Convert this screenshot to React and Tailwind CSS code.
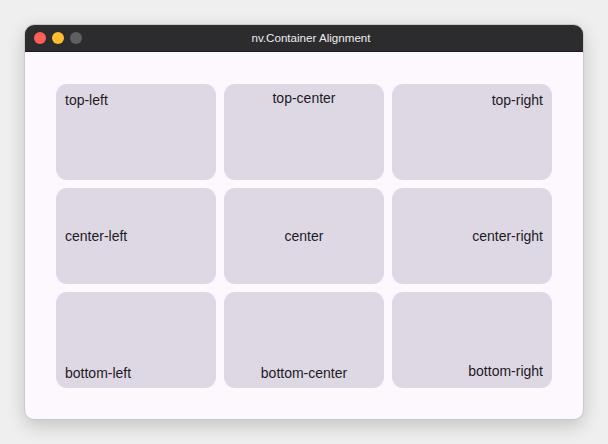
const cells = [
  { label: "top-left", cls: "items-start justify-start pt-[8px] pl-[9px]" },
  { label: "top-center", cls: "items-start justify-center pt-[6px]" },
  { label: "top-right", cls: "items-start justify-end pt-[8px] pr-[9px]" },
  { label: "center-left", cls: "items-center justify-start pl-[9px]" },
  { label: "center", cls: "items-center justify-center" },
  { label: "center-right", cls: "items-center justify-end pr-[9px]" },
  { label: "bottom-left", cls: "items-end justify-start pl-[9px] pb-[7px]" },
  { label: "bottom-center", cls: "items-end justify-center pb-[7px]" },
  { label: "bottom-right", cls: "items-end justify-end pr-[9px] pb-[9px]" },
];

export default function App() {
  return (
    <div
      className="w-[608px] h-[444px] bg-[#efeff0] pt-[24px] pl-[24px]"
      style={{ fontFamily: '"Liberation Sans", Arial, sans-serif' }}
    >
      {/* Window */}
      <div className="w-[560px] h-[396px] rounded-[10px] overflow-hidden border border-[#c9c9cc] shadow-[0_6px_18px_rgba(0,0,0,0.18)] flex flex-col bg-[#fcf8fe]">
        {/* Title bar */}
        <div className="relative h-[27px] bg-[#2c2c2e] flex items-center pl-[9px] gap-[6px] border-b border-[#1a1a1a]">
          <span className="w-[12px] h-[12px] rounded-full bg-[#fe5f57]" />
          <span className="w-[12px] h-[12px] rounded-full bg-[#febc2e]" />
          <span className="w-[12px] h-[12px] rounded-full bg-[#5f5f63]" />
          <span className="absolute inset-0 flex items-center justify-center pl-[14px] text-[11.6px] text-[#ececee]">
            nv.Container Alignment
          </span>
        </div>

        {/* Content */}
        <div className="flex-1 pt-[32px] pl-[31px]">
          <div className="grid grid-cols-[160px_160px_160px] grid-rows-[96px_96px_96px] gap-[8px]">
            {cells.map((c) => (
              <div
                key={c.label}
                className={`flex rounded-[11px] bg-[#ded8e4] text-[14px] leading-[16px] text-[#1c1b1f] ${c.cls}`}
              >
                {c.label}
              </div>
            ))}
          </div>
        </div>
      </div>
    </div>
  );
}
